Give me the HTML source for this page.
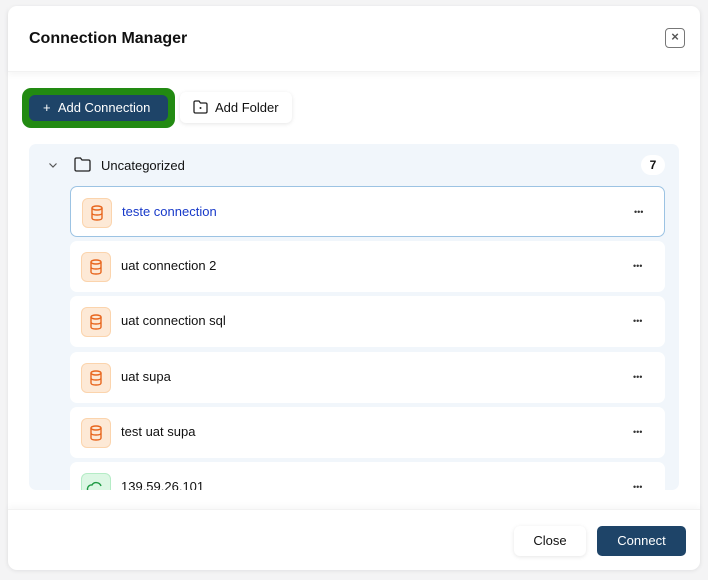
<!DOCTYPE html>
<html><head><style>
*{box-sizing:border-box;margin:0;padding:0}
body{width:708px;height:580px;background:#f4f4f5;font-family:"Liberation Sans",sans-serif;position:relative;overflow:hidden;color:#111}
.modal{position:absolute;left:8px;top:6px;width:692px;height:564px;background:#fff;border-radius:9px;box-shadow:0 1px 4px rgba(0,0,0,.08)}
.hdr{position:absolute;left:0;top:0;width:100%;height:66px;box-shadow:0 3px 6px rgba(0,0,0,.04);border-bottom:1px solid #f2f2f2}
.title{position:absolute;left:21px;top:24px;font-size:16px;font-weight:bold}
.x{position:absolute;left:657px;top:22px;width:20px;height:20px;border:1.5px solid #777;border-radius:4px;color:#555;font-size:13px;line-height:16px;text-align:center;font-weight:bold}
.ac{position:absolute;left:14px;top:82px;width:153px;height:40px;background:#228a12;border-radius:9px}
.ac div{position:absolute;left:7px;top:7px;width:139px;height:26px;background:#1e4468;border-radius:6px;color:#fff;font-size:13px;line-height:26px;padding-left:14px}
.af{position:absolute;left:172px;top:86px;width:112px;height:31px;background:#fff;border-radius:6px;box-shadow:0 1px 4px rgba(0,0,0,.1);font-size:13px;line-height:31px;padding-left:35px}
.list{position:absolute;left:21px;top:138px;width:650px;height:346px;background:#f1f6fb;border-radius:7px;overflow:hidden}
.grp{position:absolute;left:72px;top:14px;font-size:13px}
.cnt{position:absolute;left:612px;top:11px;width:24px;height:20px;background:#fff;border-radius:10px;font-size:12px;font-weight:bold;text-align:center;line-height:20px}
.row{position:absolute;left:41px;width:595px;height:51px;background:#fff;border-radius:7px}
.row.sel{border:1px solid #9cc3e3}
.ic{position:absolute;left:11px;top:11px;width:30px;height:30px;border-radius:6px;background:#fde9d6;border:1px solid #fbd4ad}
.ic.g{background:#dcf7e4;border-color:#b5ecc6}
.nm{position:absolute;left:51px;top:17px;font-size:13px}
.dots{position:absolute;left:563px;top:20px;font-size:9px;letter-spacing:0px;color:#333}
.ftr{position:absolute;left:0;top:503px;width:100%;height:61px;border-top:1px solid #f2f2f2;box-shadow:0 -3px 6px rgba(0,0,0,.03)}
.cl{position:absolute;left:506px;top:16px;width:72px;height:30px;background:#fff;border-radius:6px;box-shadow:0 1px 4px rgba(0,0,0,.1);text-align:center;line-height:30px;font-size:13px}
.cn{position:absolute;left:589px;top:16px;width:89px;height:30px;background:#1e4468;border-radius:5px;color:#fff;text-align:center;line-height:30px;font-size:13px}
</style></head><body>
<div class="modal">
<div class="hdr"><div class="title">Connection Manager</div><div class="x">×</div></div>
<div class="ac"><div>+&nbsp;&nbsp;Add Connection</div></div>
<div class="af"><svg style="position:absolute;left:13px;top:8px" width="15" height="14" viewBox="0 0 15 14"><path d="M1 2.5Q1 1 2.5 1H6l1.5 2H12.5Q14 3 14 4.5V11.5Q14 13 12.5 13H2.5Q1 13 1 11.5Z" fill="none" stroke="#222" stroke-width="1.3"/><circle cx="7.5" cy="8" r="1" fill="#222"/></svg>Add Folder</div>
<div class="list">
<svg style="position:absolute;left:19px;top:17px" width="10" height="8" viewBox="0 0 10 8"><path d="M1.5 2.5L5 6L8.5 2.5" fill="none" stroke="#555" stroke-width="1.2"/></svg>
<svg style="position:absolute;left:45px;top:13px" width="17" height="15" viewBox="0 0 17 15"><path d="M1 2.5Q1 1 2.5 1H6.5l1.5 2H14.5Q16 3 16 4.5V12.5Q16 14 14.5 14H2.5Q1 14 1 12.5Z" fill="none" stroke="#222" stroke-width="1.3"/></svg>
<div class="grp">Uncategorized</div><div class="cnt">7</div>
<div class="row sel" style="top:42px"><div class="ic"><svg width="28" height="28" viewBox="0 0 28 28"><ellipse cx="14" cy="9" rx="5" ry="2" fill="none" stroke="#e8661e" stroke-width="1.4"/><path d="M9 9v10q0 2 5 2t5-2V9M9 14q0 2 5 2t5-2" fill="none" stroke="#e8661e" stroke-width="1.4"/></svg></div><div class="nm" style="color:#1739c9">teste connection</div><div class="dots">•••</div></div>
<div class="row" style="top:97px"><div class="ic"><svg width="28" height="28" viewBox="0 0 28 28"><ellipse cx="14" cy="9" rx="5" ry="2" fill="none" stroke="#e8661e" stroke-width="1.4"/><path d="M9 9v10q0 2 5 2t5-2V9M9 14q0 2 5 2t5-2" fill="none" stroke="#e8661e" stroke-width="1.4"/></svg></div><div class="nm">uat connection 2</div><div class="dots">•••</div></div>
<div class="row" style="top:152px"><div class="ic"><svg width="28" height="28" viewBox="0 0 28 28"><ellipse cx="14" cy="9" rx="5" ry="2" fill="none" stroke="#e8661e" stroke-width="1.4"/><path d="M9 9v10q0 2 5 2t5-2V9M9 14q0 2 5 2t5-2" fill="none" stroke="#e8661e" stroke-width="1.4"/></svg></div><div class="nm">uat connection sql</div><div class="dots">•••</div></div>
<div class="row" style="top:208px"><div class="ic"><svg width="28" height="28" viewBox="0 0 28 28"><ellipse cx="14" cy="9" rx="5" ry="2" fill="none" stroke="#e8661e" stroke-width="1.4"/><path d="M9 9v10q0 2 5 2t5-2V9M9 14q0 2 5 2t5-2" fill="none" stroke="#e8661e" stroke-width="1.4"/></svg></div><div class="nm">uat supa</div><div class="dots">•••</div></div>
<div class="row" style="top:263px"><div class="ic"><svg width="28" height="28" viewBox="0 0 28 28"><ellipse cx="14" cy="9" rx="5" ry="2" fill="none" stroke="#e8661e" stroke-width="1.4"/><path d="M9 9v10q0 2 5 2t5-2V9M9 14q0 2 5 2t5-2" fill="none" stroke="#e8661e" stroke-width="1.4"/></svg></div><div class="nm">test uat supa</div><div class="dots">•••</div></div>
<div class="row" style="top:318px"><div class="ic g"><svg width="28" height="28" viewBox="0 0 28 28"><path d="M9 19a4 4 0 0 1 1-8a5 5 0 0 1 9 1" fill="none" stroke="#1f9a44" stroke-width="1.4"/></svg></div><div class="nm">139.59.26.101</div><div class="dots">•••</div></div>
</div>
<div class="ftr"><div class="cl">Close</div><div class="cn">Connect</div></div>
</div>
</body></html>
